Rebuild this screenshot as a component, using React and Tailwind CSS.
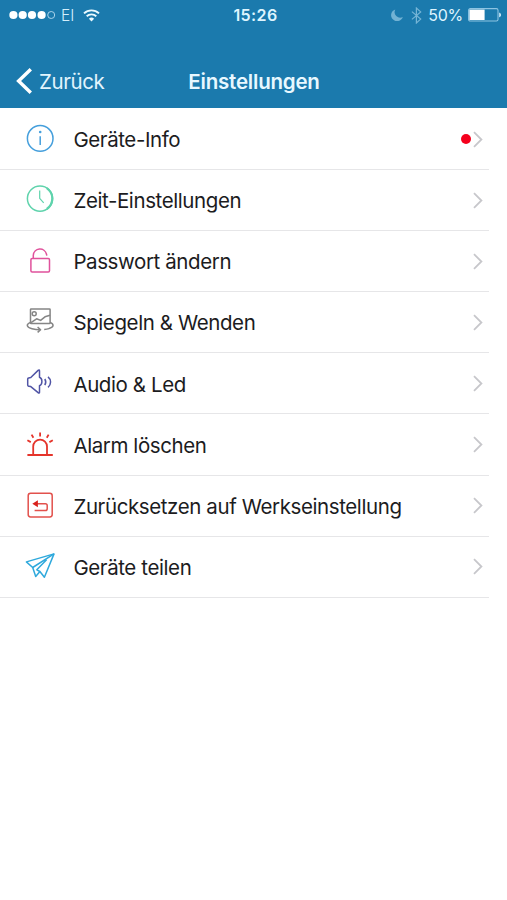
const ITEMS = [
    {
        id: "info",
        label: "Geräte-Info",
        color: "text-[#459fdc]",
        badge: true,
        icon: (
            <>
                <circle cx="16.2" cy="15.4" r="12.8" />
                <path d="M16.2 13.2v8.8" />
                <circle cx="16.2" cy="9" r="1.3" fill="currentColor" stroke="none" />
            </>
        ),
    },
    {
        id: "time",
        label: "Zeit-Einstellungen",
        color: "text-[#5fd3ac]",
        icon: (
            <>
                <circle cx="16" cy="14.6" r="12.6" />
                <path d="M22.8 4.2a12.6 12.6 0 0 1 0 20.8" strokeWidth="2.2" />
                <path d="M15.7 6.4v8l4 4.4" strokeWidth="1.2" />
            </>
        ),
    },
    {
        id: "password",
        label: "Passwort ändern",
        color: "text-[#e0529c]",
        icon: (
            <>
                <rect x="6.9" y="13.6" width="18.6" height="13.4" rx="1.2" />
                <path d="M9.3 13.6v-3.2a6.7 6.7 0 0 1 13.2-1.2l.3 1.4" />
            </>
        ),
    },
    {
        id: "flip",
        label: "Spiegeln & Wenden",
        color: "text-[#858585]",
        icon: (
            <>
                <rect x="6.5" y="3" width="19.6" height="14.6" rx="0.6" />
                <circle cx="10.2" cy="7.7" r="2" />
                <path d="M7 16.6l5.6-3.8 4 1.6 4.4-3.6 5-1.6" />
                <path d="M6.4 16.4C1.6 18.4 2.6 21.4 8 22.8c2.4.6 5 .9 8.4.9M26 16.4c4.6 1.8 3.8 5-1 6.2-1.4.4-3 .7-4.8.9M13.6 21l3 2.7-3 2.7" />
            </>
        ),
    },
    {
        id: "audio",
        label: "Audio & Led",
        color: "text-[#5054a5]",
        icon: (
            <>
                <path d="M3.7 12c0-.6.3-1 .9-1.1l2.2-.4 7.3-7.1c.8-.7 1.4-.4 1.4.5v6.4c3.2 1.2 3.2 7 0 8.3v6.6c0 .9-.6 1.2-1.4.5l-7.3-6.1-2.2-.4c-.6-.1-.9-.5-.9-1.1z" />
                <path d="M20.8 12c1 1.6 1 4.6 0 6.2M24 9.8c3.4 2.6 3.4 8 0 10.6" />
            </>
        ),
    },
    {
        id: "alarm",
        label: "Alarm löschen",
        color: "text-[#e5342b]",
        icon: (
            <g strokeWidth="1.8">
                <path d="M3.4 26h25.4M9.2 26v-8.4a6.9 6.9 0 0 1 13.8 0V26" />
                <path d="M16.1 3.4v4M7.6 5.6l1.8 3.2M24.6 5.6l-1.8 3.2M3.4 11.2l3.4 1.9M28.8 11.2l-3.4 1.9" />
            </g>
        ),
    },
    {
        id: "reset",
        label: "Zurücksetzen auf Werkseinstellung",
        color: "text-[#e2514c]",
        icon: (
            <>
                <rect x="4.2" y="3.3" width="24" height="23.6" rx="2.4" />
                <path d="M13 13.8h8.4q1.8 0 1.8 1.8v3.2q0 1.8-1.8 1.8H10.6" />
                <path d="M8.3 13.8l5.6-3.5v7z" fill="#d9211c" stroke="none" />
            </>
        ),
    },
    {
        id: "share",
        label: "Geräte teilen",
        color: "text-[#2fa9dc]",
        icon: (
            <>
                <path d="M2.4 10.9L30 2.9 20.4 26.3l-4.5-5.8-4.2 4.9-3-8.9z" />
                <path d="M8.7 16.5L30 2.9M15.9 20.5l-3.1-1.7 9.8-10" />
            </>
        ),
    },
];

function StatusBar() {
    return (
        <div className="grid grid-cols-[1fr_auto_1fr] items-center h-[30px] pl-[9px] pr-[5px]">
            <div className="flex items-center">
                <svg width="47" height="10" viewBox="0 0 47 10" fill="#fff">
                    <circle cx="4.4" cy="5" r="4.1" />
                    <circle cx="13.7" cy="5" r="4.1" />
                    <circle cx="23" cy="5" r="4.1" />
                    <circle cx="32.6" cy="5" r="4.1" />
                    <circle cx="42.2" cy="5" r="3.5" fill="none" stroke="#a9d3ea" strokeWidth="1" />
                </svg>
                <span className="ml-[5px] pt-px text-[15.5px] font-light text-[#d3eefb]">EI</span>
                <svg className="ml-[9px]" width="17" height="13" viewBox="0 0 17 13" fill="none" stroke="#eafaff" strokeWidth="1.9">
                    <path d="M1 4.4a10.8 10.8 0 0 1 15 0" />
                    <path d="M3.7 7.3a6.9 6.9 0 0 1 9.6 0" />
                    <path d="M8.5 12.4L5.9 9.7a3.8 3.8 0 0 1 5.2 0z" fill="#eafaff" stroke="none" />
                </svg>
            </div>
            <div className="text-[16px] font-semibold text-[#dff5ff] tracking-[0.4px]">15:26</div>
            <div className="flex items-center justify-end">
                <svg width="12" height="12" viewBox="0 0 12 12" fill="#72b2d4">
                    <path d="M4.3.4A6 6 0 1 0 11.8 8 5.6 5.6 0 0 1 4.3.4z" />
                </svg>
                <svg className="ml-2" width="11" height="17" viewBox="0 0 11 17" fill="none" stroke="#76b5d6" strokeWidth="1.2">
                    <path d="M.9 4.6l8.8 7.5-4.3 3.9V1l4.3 3.9L.9 12.4" />
                </svg>
                <span className="ml-[6px] text-[16px] tracking-[-0.3px] text-[#dff5ff]">50%</span>
                <svg className="ml-[5px]" width="34" height="14" viewBox="0 0 34 14">
                    <rect x="0.6" y="0.6" width="29.4" height="12.4" rx="1.6" fill="none" stroke="#8dc4e2" strokeWidth="1.1" />
                    <rect x="1.4" y="1.6" width="15.2" height="10.4" fill="#fff" />
                    <path d="M31.2 4.4c2.4.8 2.4 4 0 4.8z" fill="#d3eefb" />
                </svg>
            </div>
        </div>
    );
}

function NavBar() {
    return (
        <div className="grid grid-cols-[1fr_auto_1fr] items-center h-[54px] mt-[24px] px-4">
            <button className="flex items-center text-[20.5px] tracking-[-0.4px] text-[#e2f5fd]">
                <svg width="17" height="28" viewBox="0 0 17 28" fill="none" stroke="#fff" strokeWidth="3.4">
                    <path d="M14.8 2.2L2.6 14l12.2 11.8" />
                </svg>
                <span className="ml-[6px] pt-0.5">Zurück</span>
            </button>
            <h1 className="pt-0.5 pl-px text-[20.5px] tracking-[-0.2px] font-semibold text-[#e8f8ff]">Einstellungen</h1>
            <span />
        </div>
    );
}

function Row({ item }) {
    return (
        <li className="flex items-center h-[61.1px] mr-[18px] pl-6 pr-[6px] border-b border-[#e6e6e8]">
            <svg
                className={`shrink-0 ${item.color}`}
                width="32"
                height="32"
                viewBox="0 0 32 32"
                fill="none"
                stroke="currentColor"
                strokeWidth="1.5"
                strokeLinejoin="round"
            >
                {item.icon}
            </svg>
            <span className="ml-[17.4px] pt-[3px] text-[20.5px] tracking-[-0.4px] text-[#1c1c1e] whitespace-nowrap">{item.label}</span>
            <div className="flex items-center ml-auto">
                {item.badge && <span className="size-[10px] rounded-full bg-[#f5001d] mr-[2px]" />}
                <svg width="10" height="17" viewBox="0 0 10 17" fill="none" stroke="#c7c7cb" strokeWidth="1.8">
                    <path d="M1 1.2l7.4 7.3L1 15.8" />
                </svg>
            </div>
        </li>
    );
}

export default function App() {
    return (
        <div className="min-h-screen bg-white font-['Inter',sans-serif]">
            <header className="h-[108px] bg-[#1b7aad]">
                <StatusBar />
                <NavBar />
            </header>
            <ul className="pt-px">
                {ITEMS.map((item) => (
                    <Row key={item.id} item={item} />
                ))}
            </ul>
        </div>
    );
}
